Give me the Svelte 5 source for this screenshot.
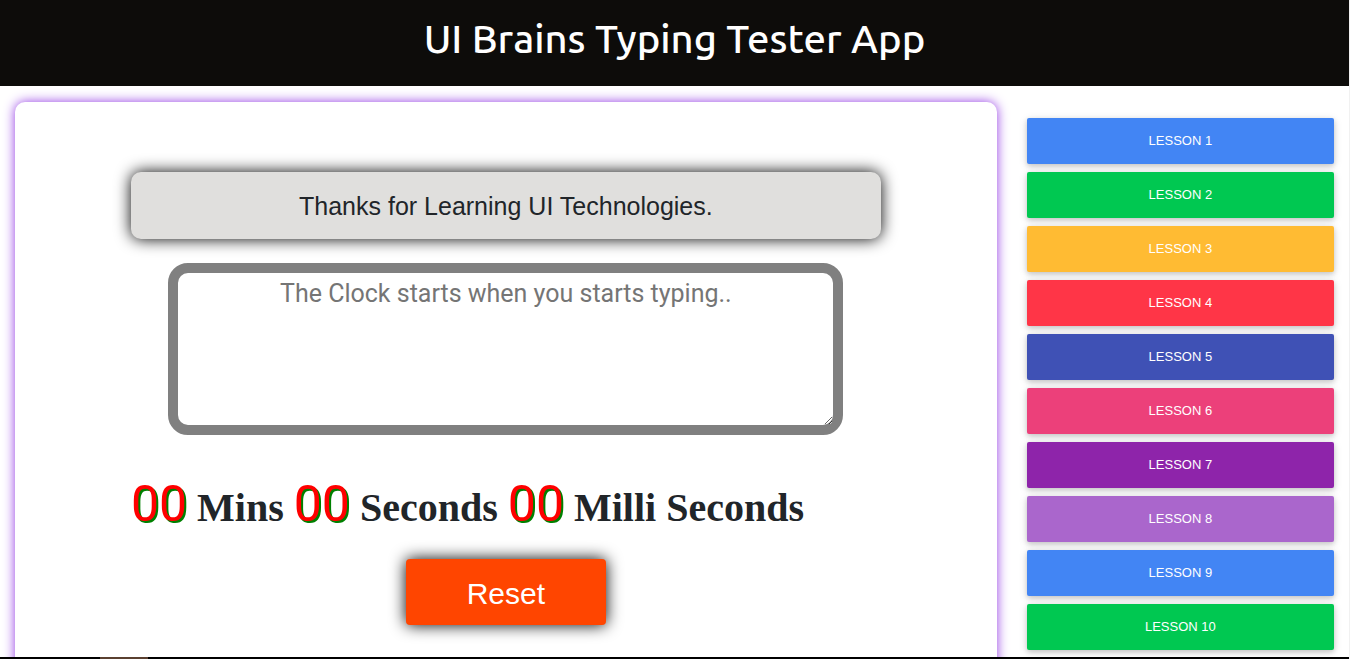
<script>
  const phrase = 'Thanks for Learning UI Technologies.';
  const colours = ['blue', 'green', 'amber', 'red', 'indigo', 'pink', 'purple', 'lilac', 'blue', 'green'];
  const lessons = colours.map((colour, i) => ({ colour, label: `Lesson ${i + 1}` }));

  let typed = $state('');
  let elapsed = $state(0);
  let timer;

  const pad = (n) => String(n).padStart(2, '0');
  let mins = $derived(pad(Math.floor(elapsed / 6000)));
  let secs = $derived(pad(Math.floor(elapsed / 100) % 60));
  let millis = $derived(pad(elapsed % 100));

  function start() {
    if (!timer) timer = setInterval(() => (elapsed += 1), 10);
    if (typed === phrase) stop();
  }

  function stop() {
    clearInterval(timer);
    timer = undefined;
  }

  function reset() {
    stop();
    typed = '';
    elapsed = 0;
  }
</script>

<div class="page">
  <header>
    <h1>UI Brains Typing Tester App</h1>
  </header>

  <div class="columns">
    <main>
      <section class="card">
        <div class="content">
          <p class="phrase">{phrase}</p>
          <textarea
            aria-label="Typing area"
            placeholder="The Clock starts when you starts typing.."
            bind:value={typed}
            oninput={start}
          ></textarea>
          <div class="clock">
            <span class="digits">{mins}</span> Mins
            <span class="digits">{secs}</span> Seconds
            <span class="digits">{millis}</span> Milli Seconds
          </div>
          <button class="reset" type="button" onclick={reset}>Reset</button>
        </div>
      </section>
    </main>

    <aside>
      {#each lessons as lesson}
        <button type="button" class="lesson {lesson.colour}" onclick={reset}>{lesson.label}</button>
      {/each}
    </aside>
  </div>

  <div class="taskbar"><span></span></div>
</div>

<style>
  :global(body) {
    margin: 0;
    background: #fff;
    overflow: hidden;
  }

  .page {
    box-sizing: border-box;
    height: 100vh;
    display: flex;
    flex-direction: column;
    color: #212529;
    border-right: 1px solid #f1f1f1;
  }

  header {
    background: #0d0c0a;
    padding: 15px;
    text-align: center;
  }

  h1 {
    margin: 0;
    color: #fff;
    font: 500 40px/48px Ubuntu, "Noto Sans", sans-serif;
    padding-bottom: 8px;
  }

  .columns {
    flex: 1;
    min-height: 0;
    display: flex;
    overflow: hidden;
  }

  main,
  aside {
    box-sizing: border-box;
    padding: 16px 15px 0;
  }

  main {
    flex: 0 0 75%;
  }

  aside {
    flex: 1;
    display: flex;
    flex-direction: column;
    gap: 8px;
    padding-top: 32px;
  }

  .card {
    box-sizing: border-box;
    min-height: 100vh;
    padding: 70px 16px;
    border-radius: 10px;
    box-shadow: 0 0 12px #9238e4;
  }

  .content {
    max-width: 750px;
    margin: 0 auto;
    display: flex;
    flex-direction: column;
    align-items: center;
  }

  .phrase {
    box-sizing: border-box;
    width: 100%;
    margin: 0;
    padding: 16px 15px 14px;
    text-align: center;
    font: 25px/37px "Liberation Sans", Arial, sans-serif;
    background: #e0dfdd;
    border-radius: 10px;
    box-shadow: 0 0 16px #000;
  }

  textarea {
    box-sizing: border-box;
    width: 90%;
    height: 172px;
    margin: 24px 0 0;
    padding: 2px;
    border: 10px solid gray;
    border-radius: 20px;
    outline: 0;
    resize: both;
    text-align: center;
    color: #212529;
    background: #fff;
    font: 25px/37px Roboto, sans-serif;
  }

  textarea::placeholder {
    color: #757575;
  }

  .clock {
    width: 100%;
    margin-top: 32px;
    white-space: nowrap;
    font: 700 40px/75px "Old English Text MT", "Liberation Serif", serif;
  }

  .digits {
    color: red;
    font: 400 50px/75px Roboto, sans-serif;
    text-shadow: 2px 2px green;
  }

  button {
    border: 0;
    color: #fff;
    cursor: pointer;
    font-family: "Liberation Sans", Arial, sans-serif;
  }

  .reset {
    width: 200px;
    margin-top: 14px;
    padding: 12px 10px 8px;
    font-size: 30px;
    line-height: 46px;
    background: #ff4500;
    border-radius: 4px;
    box-shadow: 0 0 16px #000;
  }

  .lesson {
    padding: 13px 16px;
    font-size: 13px;
    line-height: 20px;
    text-transform: uppercase;
    border-radius: 2px;
    box-shadow: 0 2px 5px rgba(0, 0, 0, 0.16), 0 2px 10px rgba(0, 0, 0, 0.12);
  }

  .blue { background: #4285f4; }
  .green { background: #00c851; }
  .amber { background: #fb3; }
  .red { background: #ff3547; }
  .indigo { background: #3f51b5; }
  .pink { background: #ec407a; }
  .purple { background: #8e24aa; }
  .lilac { background: #a6c; }

  .taskbar {
    height: 2px;
    background: #000;
    padding-left: 100px;
  }

  .taskbar span {
    display: block;
    width: 48px;
    height: 2px;
    background: #5a4030;
  }
</style>
